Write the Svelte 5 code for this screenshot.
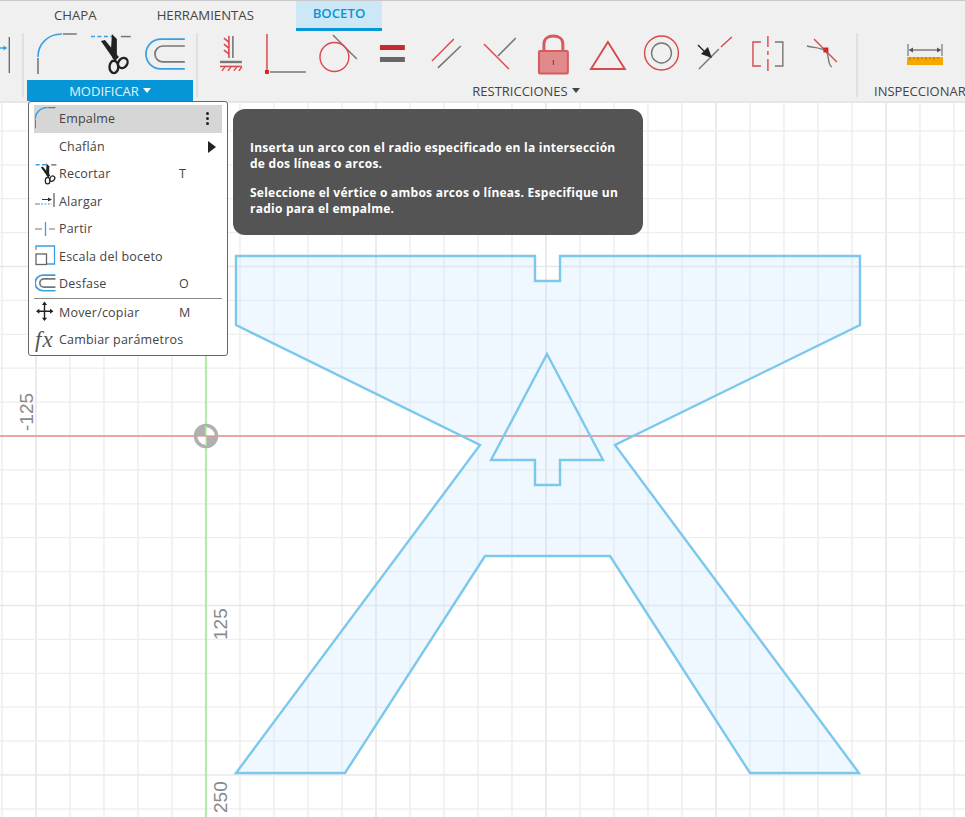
<script>
  const red = '#d9484c';
  const gray = '#777';

  // grid lines on the sketch plane
  const vLines = [];
  for (let i = -6; i < 24; i++) vLines.push({ x: 206 + i * 34, major: i % 5 === 0 });
  const hLines = [];
  for (let i = -10; i < 12; i++) hLines.push({ y: 436 + i * 33.9, major: i % 5 === 0 });

  const outline = '236,256 535,256 535,281 560,281 560,256 860,256 860,325 615,445 859,773 750,773 610,556 485,556 345,773 236,773 480,445 236,325';
  const tree = '547,354 603,460 560,460 560,485 535,485 535,460 491,460';

  const menu = [
    { label: 'Empalme', icon: 'fillet', active: true },
    { label: 'Chaflán', arrow: true },
    { label: 'Recortar', icon: 'trim', key: 'T' },
    { label: 'Alargar', icon: 'extend' },
    { label: 'Partir', icon: 'split' },
    { label: 'Escala del boceto', icon: 'scale' },
    { label: 'Desfase', icon: 'offset', key: 'O' }
  ];
  const menu2 = [
    { label: 'Mover/copiar', icon: 'move', key: 'M' },
    { label: 'Cambiar parámetros', icon: 'fx' }
  ];
</script>

{#snippet fillet()}
  <path d="M8 27V43M33 3H47" stroke="#777" stroke-width="1.6" fill="none" />
  <path d="M8 26C8 13 18 3 32 3" stroke="#3a9fe0" stroke-width="1.6" fill="none" />
{/snippet}

{#snippet scissors()}
  <path d="M7 5.5H28" stroke="#3a9fe0" stroke-width="1.5" stroke-dasharray="4 2.5" fill="none" />
  <path d="M37 5.5H47" stroke="#777" stroke-width="1.5" fill="none" />
  <polygon points="28,3 33,8 33,26 29,28 27,20" fill="#222" />
  <polygon points="17,10 21,9 35,26 31,30" fill="#222" />
  <ellipse cx="30" cy="36" rx="4.4" ry="6.2" fill="none" stroke="#222" stroke-width="2.4" />
  <ellipse cx="39" cy="32" rx="4.4" ry="5.4" transform="rotate(35 39 32)" fill="none" stroke="#222" stroke-width="2.4" />
{/snippet}

{#snippet offset()}
  <path d="M47 8H23A15 15 0 0 0 23 38H47" stroke="#3a9fe0" stroke-width="1.7" fill="none" />
  <path d="M47 15H25A8 8 0 0 0 25 31H47" stroke="#777" stroke-width="1.7" fill="none" />
{/snippet}

{#snippet menuIcon(name)}
  <svg class="mi" viewBox="0 0 24 24" width="24" height="24">
    {#if name === 'fillet'}
      <g transform="translate(-4 -1) scale(.52)">{@render fillet()}</g>
    {:else if name === 'trim'}
      <g transform="translate(-3 0) scale(.52)">{@render scissors()}</g>
    {:else if name === 'offset'}
      <g transform="translate(-4 -1) scale(.52)">{@render offset()}</g>
    {:else if name === 'extend'}
      <path d="M0 15H5" stroke="#777" stroke-width="1" fill="none" />
      <path d="M6 15H17" stroke="#3a9fe0" stroke-width="1" stroke-dasharray="2 1.5" fill="none" />
      <path d="M7 10.5H14" stroke="#333" stroke-width="1" fill="none" />
      <polygon points="17,10.5 13,8.5 13,12.5" fill="#333" />
      <path d="M19 4V18" stroke="#555" stroke-width="1.2" fill="none" />
    {:else if name === 'split'}
      <path d="M0 12H7M14 12H20" stroke="#777" stroke-width="1.2" fill="none" />
      <path d="M10.5 5V19" stroke="#3a9fe0" stroke-width="1.3" fill="none" />
    {:else if name === 'scale'}
      <path d="M1 6V2H19.5V20H11" stroke="#3a9fe0" stroke-width="1.3" fill="none" />
      <rect x="1" y="10" width="10.5" height="10.5" stroke="#666" stroke-width="1.3" fill="none" />
    {:else if name === 'move'}
      <g transform="translate(1 1.5) scale(.85)">
        <path d="M10 3V20M2 11.5H19" stroke="#222" stroke-width="1.4" fill="none" />
        <polygon points="10,0 7,4 13,4" fill="#222" />
        <polygon points="10,23 7,19 13,19" fill="#222" />
        <polygon points="0,11.5 4,8.5 4,14.5" fill="#222" />
        <polygon points="20.5,11.5 16.5,8.5 16.5,14.5" fill="#222" />
      </g>
    {/if}
  </svg>
{/snippet}

<div class="page">
  <div class="tabs">
    <span class="tab chapa">CHAPA</span>
    <span class="tab tools">HERRAMIENTAS</span>
    <span class="tab current">BOCETO</span>
  </div>

  <div class="toolbar">
    <div class="stub">
      <svg width="12" height="38" viewBox="0 0 12 38">
        <path d="M0 12H5" stroke="#3a9fe0" stroke-width="1.5" />
        <polygon points="7.5,12 3.5,9.5 3.5,14.5" fill="#3a9fe0" />
        <path d="M9.3 1V37" stroke="#666" stroke-width="1.3" />
      </svg>
    </div>
    <div class="sep"></div>

    <div class="group modify">
      <div class="icons">
        <svg class="slot" viewBox="0 0 54 44">{@render fillet()}</svg>
        <svg class="slot" viewBox="0 0 54 44">{@render scissors()}</svg>
        <svg class="slot" viewBox="0 0 54 44">{@render offset()}</svg>
      </div>
      <div class="label active">MODIFICAR<i class="caret"></i></div>
    </div>
    <div class="sep second"></div>

    <div class="group constraints">
      <div class="icons">
        <svg class="slot" viewBox="0 0 54 44">
          <path d="M29 5V27" stroke={gray} stroke-width="1.6" />
          <path d="M25 5V27" stroke={red} stroke-width="1.6" />
          <path d="M20 7L25 11M20 13L25 17M20 19L25 23" stroke={red} stroke-width="1.6" />
          <path d="M16 31H38" stroke={gray} stroke-width="2.4" />
          <path d="M16 35.5H38" stroke={red} stroke-width="1.6" />
          <path d="M21 36L18 40M27 36L24 40M33 36L30 40M38 36L35 40" stroke={red} stroke-width="1.4" />
        </svg>
        <svg class="slot" viewBox="0 0 54 44">
          <path d="M9 3V39" stroke={red} stroke-width="1.5" />
          <rect x="7" y="39" width="4" height="4" fill="#cc2a2a" />
          <path d="M12 41H48" stroke={gray} stroke-width="1.5" />
        </svg>
        <svg class="slot" viewBox="0 0 54 44">
          <path d="M21 4L45 28" stroke={gray} stroke-width="1.5" />
          <circle cx="22.5" cy="26" r="14.5" fill="none" stroke={red} stroke-width="1.4" />
        </svg>
        <svg class="slot" viewBox="0 0 54 44">
          <rect x="15" y="14" width="25" height="5" fill="#c8282a" />
          <rect x="15" y="26" width="25" height="5" fill="#666" />
        </svg>
        <svg class="slot" viewBox="0 0 54 44">
          <path d="M13 30L35 8" stroke={red} stroke-width="1.4" />
          <path d="M19 37L42 15" stroke={gray} stroke-width="1.6" />
        </svg>
        <svg class="slot" viewBox="0 0 54 44">
          <path d="M11 13L36 38" stroke={red} stroke-width="1.4" />
          <path d="M25 25L43 7" stroke={gray} stroke-width="1.6" />
        </svg>
        <svg class="slot" viewBox="0 0 54 44">
          <path d="M17 20V13C17 8 21 5 26.5 5C32 5 36 8 36 13V20" stroke="#d65a5e" stroke-width="3" fill="none" />
          <rect x="12" y="20" width="29" height="22.5" rx="1" fill="#e08a8c" stroke="#d65a5e" stroke-width="2" />
          <path d="M26.5 29V34" stroke="#c8282a" stroke-width="1.2" />
        </svg>
        <svg class="slot" viewBox="0 0 54 44">
          <polygon points="27,11 10,38 44,38" fill="none" stroke={red} stroke-width="1.9" />
        </svg>
        <svg class="slot" viewBox="0 0 54 44">
          <circle cx="27.6" cy="22" r="17" fill="none" stroke={red} stroke-width="1.4" />
          <circle cx="27.6" cy="22" r="10" fill="none" stroke={gray} stroke-width="1.4" />
        </svg>
        <svg class="slot" viewBox="0 0 54 44">
          <path d="M11 38L31 18" stroke={gray} stroke-width="1.5" />
          <path d="M33 16L44 6" stroke={red} stroke-width="1.4" />
          <path d="M10 14L18 22" stroke="#222" stroke-width="1.3" />
          <polygon points="24,27 13,23 20,16" fill="#222" />
        </svg>
        <svg class="slot" viewBox="0 0 54 44">
          <path d="M19 11H11V35H19" stroke={red} stroke-width="1.4" fill="none" />
          <path d="M26 5V16M26 20V24M26 28V40" stroke={red} stroke-width="1.4" />
          <path d="M33 11H41V35H33" stroke={gray} stroke-width="1.4" fill="none" />
        </svg>
        <svg class="slot" viewBox="0 0 54 44">
          <path d="M18 8L41 31" stroke={red} stroke-width="1.4" />
          <path d="M11 15C18 17 24 16 30 20C34 25 31 33 36 36" stroke={gray} stroke-width="1.4" fill="none" />
          <rect x="27.5" y="16.5" width="5" height="5" fill="#cc2a2a" />
        </svg>
      </div>
      <div class="label shifted">RESTRICCIONES<i class="caret dark"></i></div>
    </div>
    <div class="sep third"></div>

    <div class="group inspect">
      <div class="icons">
        <svg class="measure" viewBox="0 0 36 24" width="36" height="24">
          <path d="M1 0V12M35 0V12" stroke={gray} stroke-width="1.2" />
          <path d="M4 6H32" stroke="#555" stroke-width="1.1" />
          <polygon points="1.5,6 6,3.5 6,8.5" fill="#555" />
          <polygon points="34.5,6 30,3.5 30,8.5" fill="#555" />
          <rect x="0" y="13" width="36" height="8" fill="#f5a800" />
          <path d="M3 13V16M7 13V15M11 13V16M15 13V15M19 13V16M23 13V15M27 13V16M31 13V15" stroke="#a87410" stroke-width="1" />
        </svg>
      </div>
      <div class="label">INSPECCIONAR</div>
    </div>
  </div>

  <div class="canvas">
    <svg class="plane" viewBox="0 103 965 714" width="965" height="714">
      {#each vLines as l}
        <line x1={l.x} x2={l.x} y1="103" y2="817" stroke={l.major ? '#e0e0e0' : '#ececec'} stroke-width="1.3" />
      {/each}
      {#each hLines as l}
        <line y1={l.y} y2={l.y} x1="0" x2="965" stroke={l.major ? '#e8e8e8' : '#eeeeee'} stroke-width="1.3" />
      {/each}

      <polygon points={outline} fill="#bfe4fb" fill-opacity=".25" />
      <line x1="0" x2="965" y1="436" y2="436" stroke="#e58c8c" stroke-width="1.5" />
      <line x1="206" x2="206" y1="103" y2="817" stroke="#b4eba9" stroke-width="2.2" />
      <polygon points={outline} fill="none" stroke="#7cc8ec" stroke-width="2.4" />
      <polygon points={tree} fill="none" stroke="#7cc8ec" stroke-width="2.4" />

      <circle cx="206" cy="436" r="10.5" fill="#fff" stroke="#b0b0b0" stroke-width="3.5" />
      <path d="M206 436V426A10 10 0 0 0 196 436Z" fill="#b0b0b0" />
      <path d="M206 436V446A10 10 0 0 0 216 436Z" fill="#b0b0b0" />
      <line x1="206" x2="206" y1="426" y2="446" stroke="#b4eba9" stroke-width="1.5" />
      <line x1="196" x2="216" y1="436" y2="436" stroke="#e58c8c" stroke-width="1.2" />

      <text class="scale" transform="translate(33 431) rotate(-90)">-125</text>
      <text class="scale" transform="translate(227 640) rotate(-90)">125</text>
      <text class="scale" transform="translate(227 813) rotate(-90)">250</text>
    </svg>

    <div class="menu">
      {#each menu as item}
        <div class="row" class:hover={item.active}>
          {#if item.icon}{@render menuIcon(item.icon)}{:else}<span class="mi"></span>{/if}
          <span>{item.label}</span>
          <span class="key">{item.key ?? ''}</span>
          {#if item.active}<span class="dots"><i></i><i></i><i></i></span>{/if}
          {#if item.arrow}<i class="more"></i>{/if}
        </div>
      {/each}
      <hr />
      {#each menu2 as item}
        <div class="row">
          {#if item.icon === 'fx'}<span class="mi fx">fx</span>{:else}{@render menuIcon(item.icon)}{/if}
          <span>{item.label}</span>
          {#if item.key}<span class="key">{item.key}</span>{/if}
        </div>
      {/each}
    </div>

    <div class="tip">
      <p>Inserta un arco con el radio especificado en la intersección de dos líneas o arcos.</p>
      <p>Seleccione el vértice o ambos arcos o líneas. Especifique un radio para el empalme.</p>
    </div>
  </div>
</div>

<style>
  :global(body) {
    margin: 0;
    background: #fff;
    overflow: hidden;
    font-family: "Open Sans", "Liberation Sans", sans-serif;
  }

  .page {
    width: 965px;
    height: 817px;
    overflow: hidden;
    display: flex;
    flex-direction: column;
  }

  .tabs {
    height: 31px;
    box-sizing: border-box;
    border-top: 1px solid #c8c8c8;
    background: #f0f0f0;
    display: flex;
    font-size: 13.2px;
    color: #444;
  }
  .tab {
    display: flex;
    align-items: center;
    height: 27px;
  }
  .chapa { margin-left: 54px; }
  .tools { margin-left: 60px; }
  .current {
    margin-left: 42px;
    width: 86px;
    height: 30px;
    box-sizing: border-box;
    padding-bottom: 3px;
    justify-content: center;
    background: #cce8f6;
    border-bottom: 3px solid #0696d7;
    color: #0696d7;
    font-weight: 600;
  }

  .toolbar {
    height: 72px;
    box-sizing: border-box;
    background: #f0f0f0;
    border-bottom: 2px solid #e6e6e6;
    display: flex;
    align-items: flex-start;
  }
  .stub {
    width: 22px;
    padding-top: 5px;
    flex: none;
  }
  .stub svg { display: block; }
  .sep {
    width: 2px;
    height: 64px;
    margin-top: 2px;
    background: #e0e0e0;
    flex: none;
  }
  .group {
    display: flex;
    flex-direction: column;
    flex: none;
  }
  .modify { width: 166px; margin-left: 3px; }
  .modify .icons { padding-left: 3px; }
  .second { margin-left: 3px; }
  .constraints { width: 652px; margin-left: 6px; }
  .inspect { width: 108px; margin-left: 16px; flex: none; }
  .icons {
    display: flex;
    height: 49px;
    flex: none;
  }
  .slot {
    width: 53.8px;
    height: 44px;
    flex: none;
  }
  .measure { margin: 13px 0 0 33px; }

  .label {
    height: 21px;
    padding-top: 1px;
    box-sizing: border-box;
    display: flex;
    align-items: center;
    justify-content: center;
    font-size: 13px;
    color: #444;
    white-space: nowrap;
  }
  .label.active {
    background: #0696d7;
    color: #e4f3fb;
  }
  .label.shifted { padding-right: 8px; }
  .inspect .label { justify-content: flex-start; }
  .caret {
    width: 0;
    height: 0;
    margin-left: 4px;
    margin-bottom: 2px;
    border-left: 4px solid transparent;
    border-right: 4px solid transparent;
    border-top: 5px solid #fff;
  }
  .caret.dark { border-top-color: #444; }

  .canvas {
    position: relative;
    flex: 1;
    background: #fff;
  }
  .plane {
    display: block;
  }
  .scale {
    font-family: "Liberation Sans", sans-serif;
    font-size: 19px;
    fill: #8a8a8a;
  }

  .menu {
    position: absolute;
    left: 28px;
    top: -2px;
    width: 200px;
    height: 255px;
    box-sizing: border-box;
    padding: 3px 5px;
    background: #fff;
    border: 1px solid #666;
    border-radius: 3px;
    font-size: 12.5px;
    letter-spacing: .2px;
    color: #444;
  }
  .row {
    position: relative;
    display: grid;
    grid-template-columns: 25px 120px 30px;
    align-items: center;
    height: 27.5px;
    white-space: nowrap;
  }
  .row.hover { background: #d6d6d6; }
  .mi { display: block; margin-left: 1px; }
  .mi path { vector-effect: non-scaling-stroke; }
  .fx {
    font-family: "Liberation Serif", serif;
    font-style: italic;
    font-size: 23px;
    letter-spacing: 1px;
    line-height: 24px;
    color: #555;
  }
  .dots {
    position: absolute;
    left: 172px;
    top: 7px;
    display: flex;
    flex-direction: column;
    gap: 2px;
  }
  .dots i {
    width: 3px;
    height: 3px;
    border-radius: 50%;
    background: #222;
  }
  .more {
    position: absolute;
    left: 174px;
    top: 8px;
    width: 0;
    height: 0;
    border-top: 6px solid transparent;
    border-bottom: 6px solid transparent;
    border-left: 8px solid #222;
  }
  hr {
    margin: 0;
    border: 0;
    border-top: 1px solid #888;
  }

  .tip {
    position: absolute;
    left: 233px;
    top: 6px;
    width: 410px;
    height: 126px;
    box-sizing: border-box;
    padding: 31px 17px 0;
    background: #545454;
    border-radius: 12px;
    color: #fff;
    font-size: 12px;
    font-weight: 700;
    letter-spacing: .25px;
    line-height: 16px;
  }
  .tip p {
    margin: 0 0 13px;
  }
</style>
